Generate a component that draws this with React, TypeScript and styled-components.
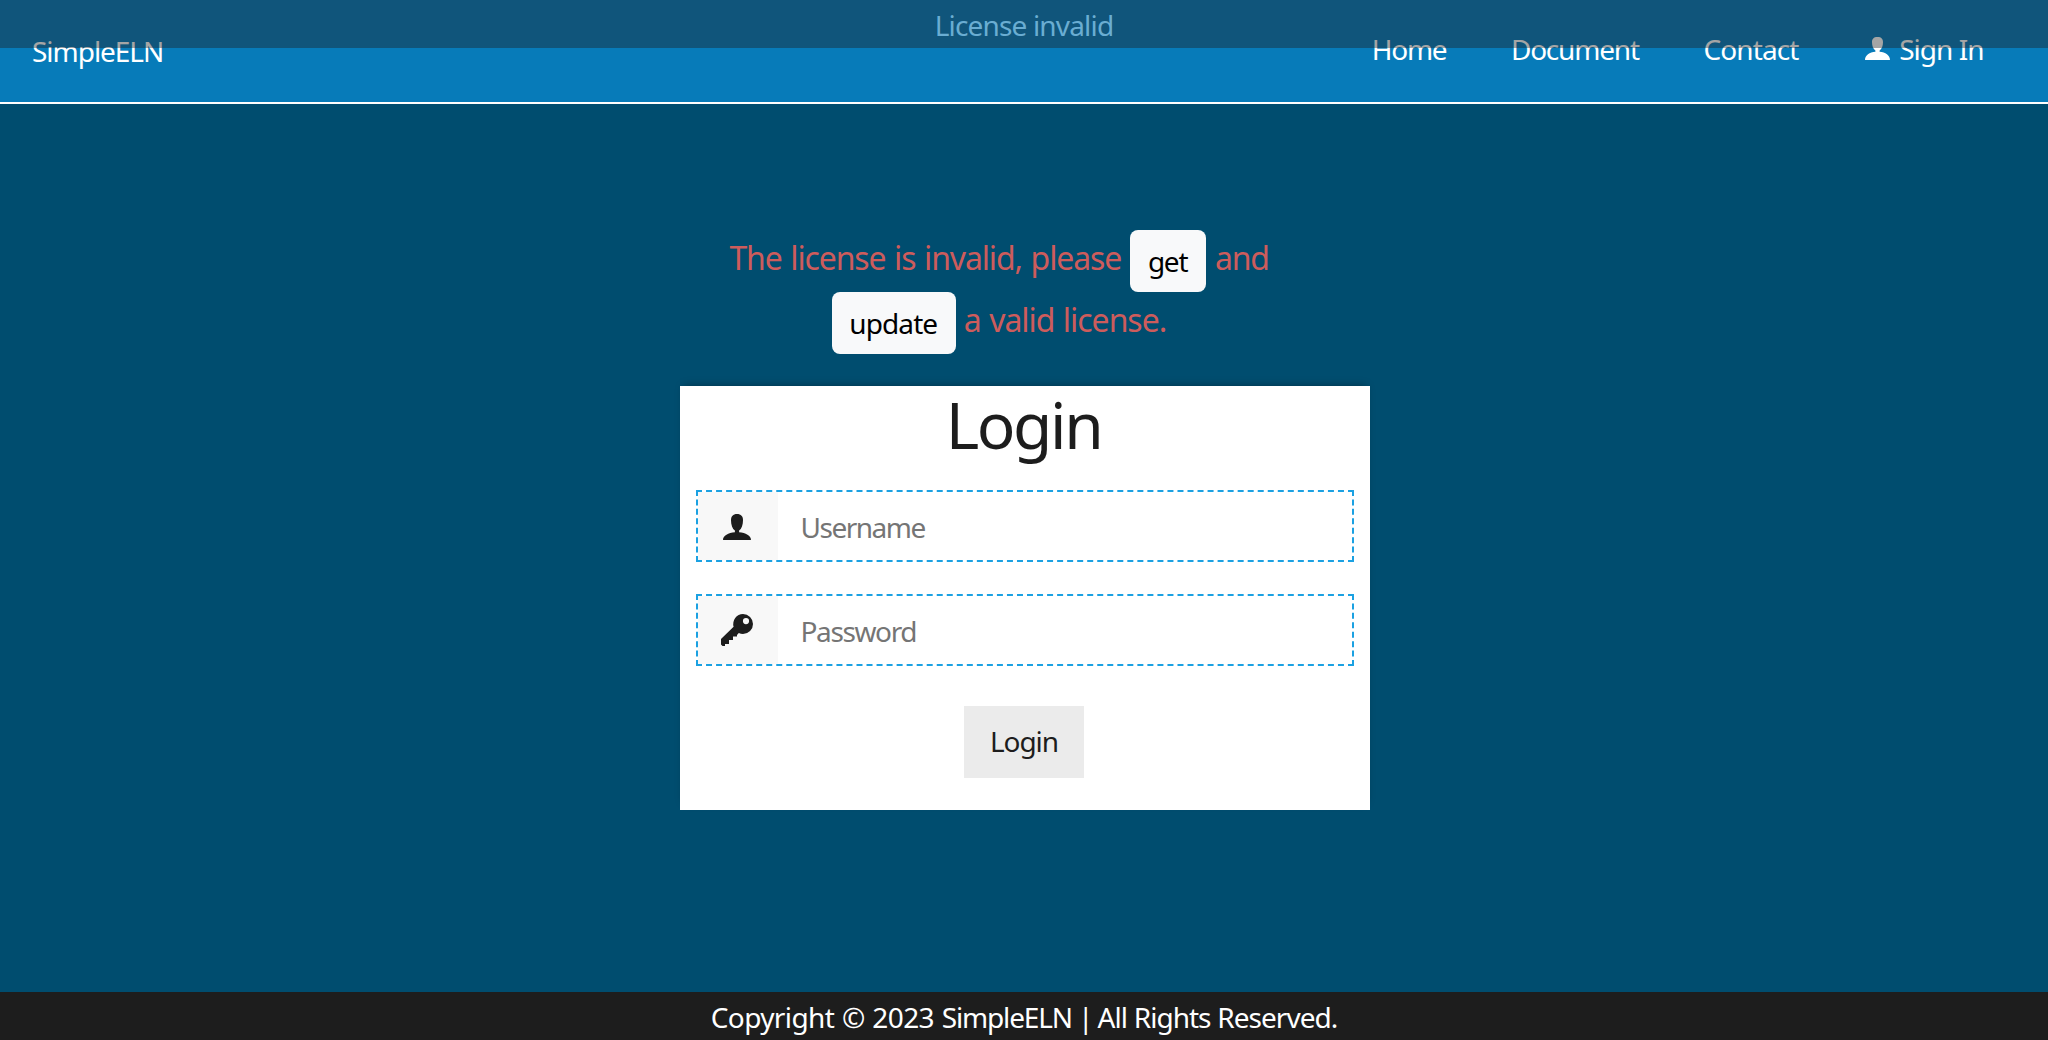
import React from 'react';
import styled, { createGlobalStyle } from 'styled-components';

const GlobalStyle = createGlobalStyle`
  * { box-sizing: border-box; }
  body {
    margin: 0;
    background: #004d6f;
    font-family: "Noto Sans", "Open Sans", sans-serif;
    font-size: 28px;
    line-height: 42px;
    color: #1d1d1d;
  }
`;

const Page = styled.div`
  display: flex;
  flex-direction: column;
  height: 1040px;
  overflow: hidden;
`;

const Label = styled.span<{ $spacing: number; $word?: number }>`
  letter-spacing: ${(p) => p.$spacing}px;
  word-spacing: ${(p) => p.$word ?? 0}px;
  white-space: pre;
`;

const Banner = styled.div`
  position: absolute;
  top: 0;
  left: 0;
  z-index: 10;
  width: 100%;
  height: 48px;
  line-height: 50px;
  text-align: center;
  color: #6aadd2;
  background: rgba(30, 30, 30, 0.4);
`;

const Header = styled.header`
  display: flex;
  justify-content: space-between;
  height: 104px;
  padding: 28px 64.3px 0 32px;
  color: #fff;
  background: #077bb9;
  border-bottom: 2px solid #fff;
`;

const Brand = styled.div`
  padding-top: 2px;
`;

const Nav = styled.nav`
  display: flex;
  gap: 64.6px;
`;

const NavLink = styled.a`
  display: flex;
  gap: 8px;
  height: 42px;
  color: inherit;
`;

const Main = styled.main`
  flex: 1;
  display: flex;
  flex-direction: column;
  align-items: center;
  padding: 126px 0 0 2px;
`;

const Alert = styled.div`
  display: flex;
  flex-direction: column;
  align-items: center;
  width: 690px;
  margin-bottom: 32px;
  padding-right: 52px;
  font-size: 32px;
  color: #cd5c5c;
`;

const AlertLine = styled.div<{ $gap: number }>`
  display: flex;
  align-items: center;
  gap: ${(p) => p.$gap}px;
  height: 62px;
`;

const AlertText = styled(Label)`
  padding-bottom: 6px;
`;

const LightButton = styled.a<{ $width: number }>`
  display: flex;
  align-items: center;
  justify-content: center;
  width: ${(p) => p.$width}px;
  height: 62px;
  padding-right: 1px;
  border-radius: 8px;
  font-size: 28px;
  color: #000;
  background: #f8f9fa;
`;

const Card = styled.form`
  display: flex;
  flex-direction: column;
  width: 690px;
  height: 424px;
  padding: 0 16px;
  background: #fff;
  box-shadow: 0 -4px 8px -4px rgba(0, 0, 0, 0.35);
`;

const Title = styled.h1`
  margin: 0 0 28px;
  padding: 2px 3px 0 0;
  font-size: 64px;
  font-weight: 400;
  line-height: 74px;
  letter-spacing: -2.4px;
  text-align: center;
`;

const Field = styled.label`
  display: flex;
  height: 72px;
  margin-bottom: 32px;
  border: 2px dashed #1ba1e2;
`;

const FieldIcon = styled.span`
  display: flex;
  align-items: center;
  justify-content: center;
  width: 80px;
  padding-right: 2px;
  background: #f8f8f8;
`;

const Input = styled.input<{ $spacing: number }>`
  flex: 1;
  min-width: 0;
  padding: 2px 22px 0 22.5px;
  border: 0;
  outline: 0;
  font: inherit;
  letter-spacing: ${(p) => p.$spacing}px;
  background: transparent;
  &::placeholder {
    color: #757575;
    opacity: 1;
  }
`;

const SubmitButton = styled.button`
  align-self: center;
  width: 120px;
  height: 72px;
  margin: 8px 2px 0 0;
  padding: 0 0 2px;
  border: 0;
  font: inherit;
  color: #1d1d1d;
  background: #ebebeb;
`;

const Footer = styled.footer`
  height: 48px;
  padding-top: 1px;
  line-height: 48px;
  text-align: center;
  color: #fff;
  background: #1d1d1d;
`;

const UserIcon = () => (
  <svg width="32" height="32" viewBox="0 0 32 32" fill="currentColor">
    <path d="M16 4c-4 0-6 2.300-6 6.200 0 4.600 1.400 8.600 3.900 10.400v1.700C7.400 23 2 25.400 2 30h28c0-4.600-5.400-7-11.900-7.700v-1.700C20.600 18.800 22 14.800 22 10.200 22 6.300 20 4 16 4z" />
  </svg>
);

const KeyIcon = () => (
  <svg width="32" height="32" viewBox="0 0 32 32" fill="currentColor">
    <path
      fillRule="evenodd"
      d="M22 0a10 10 0 0 1 0 20c-1.500 0-2.900-.3-4.200-.9L16 21v1.500h-4V26H8v4H4v2H1.500L0 30.500V25l12.600-12.300A10 10 0 0 1 22 0zm3 4a3.100 3.100 0 1 0 0 6.200A3.100 3.100 0 0 0 25 4z"
    />
  </svg>
);

export default function App() {
  return (
    <Page>
      <GlobalStyle />
      <Banner>
        <Label $spacing={-0.83}>License invalid</Label>
      </Banner>
      <Header>
        <Brand>
          <Label $spacing={-1.03}>SimpleELN</Label>
        </Brand>
        <Nav>
          <NavLink><Label $spacing={-1.3}>Home</Label></NavLink>
          <NavLink><Label $spacing={-1.2}>Document</Label></NavLink>
          <NavLink><Label $spacing={-0.88}>Contact</Label></NavLink>
          <NavLink>
            <svg width="28" height="42" viewBox="0 0 28 42" fill="currentColor">
              <path d="M14.500 9c-4 0-5.500 2-5.500 5.200 0 3.600 1.200 6.700 3.400 8.200v1.300C6.600 24.300 2 27 2 32h25c0-5-4.600-7.700-10.400-8.300v-1.300c2.200-1.500 3.400-4.600 3.400-8.200C20 11 18.500 9 14.500 9z" />
            </svg>
            <Label $spacing={-0.95}>Sign In</Label>
          </NavLink>
        </Nav>
      </Header>
      <Main>
        <Alert>
          <AlertLine $gap={9}>
            <AlertText $spacing={-1.14} $word={1.5}>The license is invalid, please</AlertText>
            <LightButton $width={76}><Label $spacing={-1.256}>get</Label></LightButton>
            <AlertText $spacing={-1.3}>and</AlertText>
          </AlertLine>
          <AlertLine $gap={8}>
            <LightButton $width={124}><Label $spacing={-0.912}>update</Label></LightButton>
            <AlertText $spacing={-1.04} $word={1.2}>a valid license.</AlertText>
          </AlertLine>
        </Alert>
        <Card>
          <Title>Login</Title>
          <Field>
            <FieldIcon><UserIcon /></FieldIcon>
            <Input $spacing={-1.5} placeholder="Username" />
          </Field>
          <Field>
            <FieldIcon><KeyIcon /></FieldIcon>
            <Input $spacing={-1.375} type="password" placeholder="Password" />
          </Field>
          <SubmitButton type="button"><Label $spacing={-1.064}>Login</Label></SubmitButton>
        </Card>
      </Main>
      <Footer>
        <Label $spacing={-0.62} $word={1.1}>Copyright © 2023 </Label>
        <Label $spacing={-1.15}>SimpleELN </Label>
        <Label $spacing={-1.6}>| </Label>
        <Label $spacing={-0.98} $word={0.5}>All Rights Reserved.</Label>
      </Footer>
    </Page>
  );
}
